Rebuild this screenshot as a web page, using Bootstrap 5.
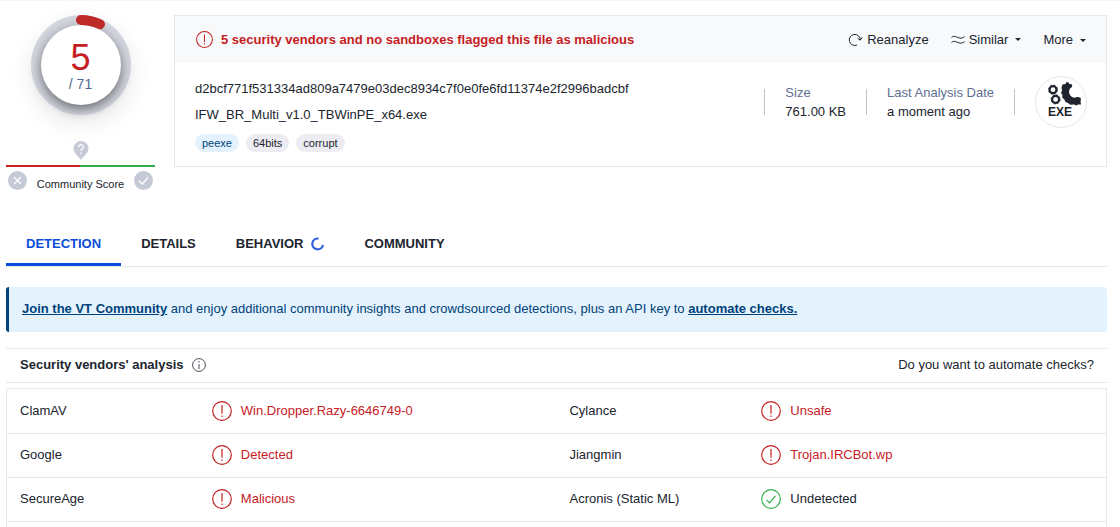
<!DOCTYPE html>
<html lang="en">
<head>
<meta charset="utf-8">
<meta name="viewport" content="width=device-width, initial-scale=1">
<title>File report</title>
<link href="https://cdn.jsdelivr.net/npm/bootstrap@5.3.0/dist/css/bootstrap.min.css" rel="stylesheet">
<style>
  :root { --ink: #20242e; --red: #c5201f; --green: #2fae4a; --blue: #0b4dda; --navy: #00427a; --line: #e4e7eb; }
  body { font-family: "Liberation Sans", Arial, sans-serif; font-size: 13px; line-height: 20px; color: var(--ink); background: #fff; }
  svg { display: block; flex: none; }
  .page { padding: 14px 13px 0 6px; border-top: 1px solid #f5f6f8; }
  .text-danger-vt { color: var(--red); }
  .text-ok { color: var(--green); }
  .score-col { width: 149px; margin-right: 19px; }
  .donut { width: 100px; height: 100px; border-radius: 50%; background: #d3d6df; box-shadow: 0 8px 24px rgba(0,0,0,.09); }
  .donut-arc { width: 100px; height: 100px; left: 0; top: 0; overflow: visible; }
  .donut-face { width: 80px; height: 80px; padding-top: 2px; border-radius: 50%; background: #fff; box-shadow: 0 4px 12px rgba(0,0,0,.5); }
  .score-num { font-size: 36px; line-height: 36px; }
  .score-total { font-size: 14px; line-height: 16px; color: #52658c; }
  .community-pin { margin-top: 26px; margin-bottom: 5px; }
  .score-bar { height: 2px; background: linear-gradient(90deg, var(--red) 50%, var(--green) 50%); }
  .vote { background: none; border: 0; padding: 0; }
  .votes { padding: 4px 2px 0; }
  .community-label { font-size: 11px; line-height: 20px; padding-top: 3px; }
  .report { border: 1px solid var(--line); }
  .report-head { background: #f8f9fb; min-height: 47px; padding: 0 20px 0 21px; }
  .report-title { font-weight: 700; }
  .actions { gap: 22px; }
  .action { background: none; border: 0; padding: 0; color: inherit; font-size: 13px; line-height: 20px; }
  .action.dropdown-toggle::after { border-top-width: 3px; border-left-width: 3px; border-right-width: 3px; margin-left: 7px; vertical-align: 2px; }
  .report-body { padding: 13px 19px 12px 20px; min-height: 103px; }
  .file-line { line-height: 26px; }
  .chips { padding-top: 6px; gap: 7px; }
  .chip { font-size: 11px; line-height: 18px; border-radius: 9px; padding: 0 7px; background: #ececf2; color: var(--ink); text-decoration: none; }
  .chip-blue { background: #e3f2fd; color: var(--navy); }
  .fact { border-left: 1px solid #bfc3cb; height: 26px; padding: 0 20px; white-space: nowrap; }
  .fact:last-of-type { padding-right: 0; }
  .fact > div { line-height: 19px; margin-top: -6px; }
  .fact-label { color: #60708f; }
  .facts { height: 52px; }
  .exe-icon { border: 1px solid var(--line); border-radius: 50%; width: 52px; height: 52px; }
  .tabs { margin-top: 29px; border-bottom: 1px solid var(--line); }
  .tabs .nav-link { font-size: 13px; line-height: 20px; font-weight: 700; color: var(--ink); padding: 11px 20px 9px; border-bottom: 3px solid transparent; }
  .tabs .nav-link.active { color: var(--blue); border-color: var(--blue); }
  .join { margin: 20px 0 16px; background: #e3f2fd; color: var(--navy); border: 0; border-left: 3px solid var(--navy); border-radius: 3px; padding: 12px 13px 13px; }
  .join a { color: var(--navy); font-weight: 700; }
  .analysis-head { border: solid var(--line); border-width: 1px 0; padding: 6px 13px 7px 14px; margin-bottom: 5px; }
  .analysis-title { font-size: 13px; line-height: 20px; font-weight: 700; }
  .vendors { border: 1px solid var(--line); border-bottom: 0; }
  .vendors table { table-layout: fixed; width: 100%; }
  .vendors td, .vendors th { height: 44px; padding: 0 13px; font-weight: 400; border-bottom: 1px solid var(--line); }
  .name-col { width: 17%; }
  .verdict-col { width: 33%; }
  .verdict { gap: 9px; margin-left: 5px; }
</style>
</head>
<body>
<svg class="d-none" aria-hidden="true">
  <symbol id="alert" viewBox="0 0 20 20"><circle cx="10" cy="10" r="9.3" fill="none" stroke="currentColor" stroke-width="1.2"/><path d="M10 4v8.800M10 14.400v1.600" stroke="currentColor" stroke-width="1.2"/></symbol>
  <symbol id="ok" viewBox="0 0 20 20"><circle cx="10" cy="10" r="9.3" fill="none" stroke="currentColor" stroke-width="1.2"/><path d="M5.600 10.800l3 3 5.800-7" fill="none" stroke="currentColor" stroke-width="1.2"/></symbol>
</svg>
<main class="page min-vh-100 d-flex flex-column">
  <div class="d-flex">
    <aside class="score-col flex-shrink-0">
      <div class="donut position-relative d-flex align-items-center justify-content-center mx-auto">
        <div class="donut-face d-flex flex-column align-items-center justify-content-center text-center">
          <div class="score-num text-danger-vt">5</div>
          <div class="score-total">/ 71</div>
        </div>
        <svg class="donut-arc position-absolute" viewBox="0 0 100 100"><path d="M50 5A45 45 0 0 1 69 9.200" fill="none" stroke="#bd2a27" stroke-width="10" stroke-linecap="round"/></svg>
      </div>
      <svg class="community-pin mx-auto" width="16" height="19" viewBox="0 0 16 19"><path d="M8 19C5.500 15 .5 12.500 .5 7.500a7.500 7.500 0 0 1 15 0C15.500 12.500 10.500 15 8 19z" fill="#c5cad6"/><path d="M5.700 6a2.300 2.300 0 1 1 3.600 1.900C8.300 8.500 8 8.900 8 10M8 11.500v1.500" fill="none" stroke="#fff" stroke-width="1.300"/></svg>
      <div class="score-bar"></div>
      <div class="votes d-flex justify-content-between align-items-start">
        <button class="vote" type="button" aria-label="Harmful"><svg width="19" height="19" viewBox="0 0 19 19"><circle cx="9.500" cy="9.500" r="9.500" fill="#c5cad6"/><path d="M6 6l7 7M13 6l-7 7" stroke="#fff" stroke-width="1.200"/></svg></button>
        <span class="community-label">Community Score</span>
        <button class="vote" type="button" aria-label="Harmless"><svg width="19" height="19" viewBox="0 0 19 19"><circle cx="9.500" cy="9.500" r="9.500" fill="#c5cad6"/><path d="M5 9.800l3.200 3.200L14 6.500" fill="none" stroke="#fff" stroke-width="1.300"/></svg></button>
      </div>
    </aside>

    <section class="report flex-grow-1 align-self-start">
      <div class="report-head d-flex align-items-center">
        <div class="report-title d-flex align-items-center gap-2 text-danger-vt me-auto">
          <svg width="17" height="17"><use href="#alert"/></svg>
          <span>5 security vendors and no sandboxes flagged this file as malicious</span>
        </div>
        <div class="actions d-flex align-items-center">
          <button class="action d-flex align-items-center gap-1" type="button">
            <svg width="15" height="14" viewBox="0 0 15 14" fill="none" stroke="currentColor"><path d="M9 12A5.500 5.500 0 1 1 12.300 7"/><path d="M9.600 5.200l2.700 2 1.900-2.900"/></svg>
            Reanalyze</button>
          <div class="dropdown">
            <button class="action dropdown-toggle d-flex align-items-center" type="button">
              <svg class="me-1" width="14" height="10" viewBox="0 0 14 10" fill="none" stroke="currentColor"><path d="M.5 2.500C2.500 .5 4.500 1.500 7 2.500s4.500 1 6.500-1M.5 7.500c2-2 4-1 6.500 0s4.500 1 6.500-1"/></svg>
              Similar</button>
          </div>
          <button class="action dropdown-toggle" type="button">More</button>
        </div>
      </div>
      <div class="report-body d-flex">
        <div class="me-auto">
          <div class="file-line">d2bcf771f531334ad809a7479e03dec8934c7f0e0fe6fd11374e2f2996badcbf</div>
          <div class="file-line">IFW_BR_Multi_v1.0_TBWinPE_x64.exe</div>
          <div class="chips d-flex">
            <a class="chip chip-blue" href="#">peexe</a>
            <a class="chip" href="#">64bits</a>
            <a class="chip" href="#">corrupt</a>
          </div>
        </div>
        <div class="facts d-flex align-items-center">
          <div class="fact"><div><span class="fact-label">Size</span><br>761.00 KB</div></div>
          <div class="fact"><div><span class="fact-label">Last Analysis Date</span><br>a moment ago</div></div>
          <div class="fact"></div>
          <svg class="exe-icon" viewBox="0 0 50 50" fill="#20242e">
            <g fill="none" stroke="#20242e"><circle cx="17" cy="12.700" r="3.500" stroke-width="2.200"/><circle cx="19.600" cy="22.400" r="3.500" stroke-width="2.200"/><circle cx="17" cy="12.700" r="4.600" stroke-width=".8" stroke-dasharray="1.800 1.810"/><circle cx="19.600" cy="22.400" r="4.600" stroke-width=".8" stroke-dasharray="1.800 1.810"/></g>
            <path d="M26.500 7.500l3-.6.7-1.600h2.300l.6 1.500 3 .8v2.300c-2.500 1.200-3.500 3.400-2.900 6 .5 2.700 2.600 4.600 5.300 4.800l2.500-.8 3.300.5.700 1.800-.5 2 .5 3.200-3 .2-1.500 1-2.300-1.200-4 .3-2.200-1.700-2.500-1-1-2.300-2.200-2.300v-2.800l-1.300-1.600 1-2.500-.5-3z"/>
            <text x="24" y="39" text-anchor="middle" font-family="Liberation Sans, Arial, sans-serif" font-weight="700" font-size="12">EXE</text>
          </svg>
        </div>
      </div>
    </section>
  </div>

  <nav class="tabs nav" aria-label="Report sections">
    <a class="nav-link active" href="#">DETECTION</a>
    <a class="nav-link" href="#">DETAILS</a>
    <a class="nav-link d-flex align-items-center gap-2" href="#">BEHAVIOR
      <svg width="13" height="14" viewBox="0 0 13 14" fill="none" stroke="#2f5fe0" stroke-width="2.200"><path d="M7.500 1.600A5.400 5.400 0 1 0 12 8"/></svg></a>
    <a class="nav-link" href="#">COMMUNITY</a>
  </nav>

  <div class="join alert"><a href="#">Join the VT Community</a> and enjoy additional community insights and crowdsourced detections, plus an API key to <a href="#">automate checks.</a></div>

  <div class="analysis-head d-flex align-items-center justify-content-between">
    <div class="d-flex align-items-center gap-2">
      <h2 class="analysis-title mb-0">Security vendors' analysis</h2>
      <svg width="14" height="14" viewBox="0 0 14 14" fill="none" stroke="#4a4e57"><circle cx="7" cy="7" r="6.400"/><path d="M7 3v1.500M7 6v5"/></svg>
    </div>
    <a class="text-reset text-decoration-none" href="#">Do you want to automate checks?</a>
  </div>

  <div class="vendors flex-grow-1">
    <table class="align-middle">
      <colgroup><col class="name-col"><col class="verdict-col"><col class="name-col"><col class="verdict-col"></colgroup>
      <tbody>
        <tr>
          <th scope="row">ClamAV</th><td><div class="verdict d-flex align-items-center text-danger-vt"><svg width="20" height="20"><use href="#alert"/></svg>Win.Dropper.Razy-6646749-0</div></td>
          <th scope="row">Cylance</th><td><div class="verdict d-flex align-items-center text-danger-vt"><svg width="20" height="20"><use href="#alert"/></svg>Unsafe</div></td>
        </tr>
        <tr>
          <th scope="row">Google</th><td><div class="verdict d-flex align-items-center text-danger-vt"><svg width="20" height="20"><use href="#alert"/></svg>Detected</div></td>
          <th scope="row">Jiangmin</th><td><div class="verdict d-flex align-items-center text-danger-vt"><svg width="20" height="20"><use href="#alert"/></svg>Trojan.IRCBot.wp</div></td>
        </tr>
        <tr>
          <th scope="row">SecureAge</th><td><div class="verdict d-flex align-items-center text-danger-vt"><svg width="20" height="20"><use href="#alert"/></svg>Malicious</div></td>
          <th scope="row">Acronis (Static ML)</th><td><div class="verdict d-flex align-items-center"><svg class="text-ok" width="20" height="20"><use href="#ok"/></svg>Undetected</div></td>
        </tr>
      </tbody>
    </table>
  </div>
</main>
<script src="https://cdn.jsdelivr.net/npm/bootstrap@5.3.0/dist/js/bootstrap.bundle.min.js"></script>
</body>
</html>
